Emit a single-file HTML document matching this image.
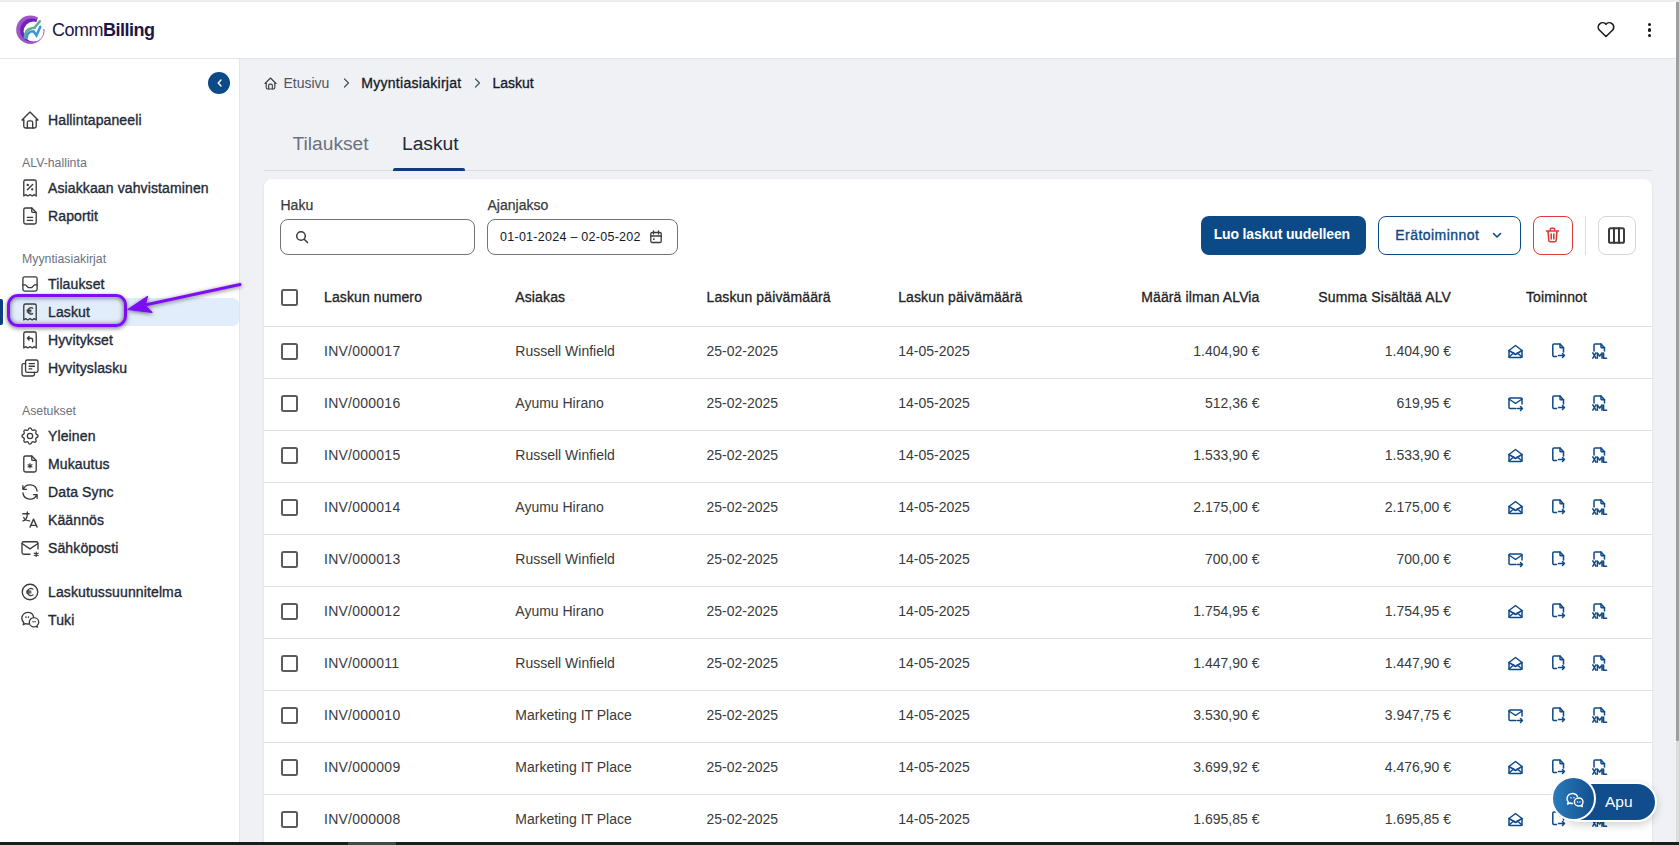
<!DOCTYPE html>
<html><head><meta charset="utf-8">
<style>
*{box-sizing:border-box;margin:0;padding:0}
html,body{width:1679px;height:845px;overflow:hidden}
body{position:relative;background:#f0f1f4;font-family:"Liberation Sans", sans-serif;}
.t{position:absolute;white-space:nowrap}
.ic{position:absolute;overflow:visible}
.abs{position:absolute}
</style></head><body>
<div class="abs" style="left:0;top:0;width:1679px;height:2px;background:#ececec"></div><div class="abs" style="left:0;top:2px;width:1676px;height:57px;background:#fff;border-bottom:1px solid #e3e5e8"></div><svg class="ic" style="left:12px;top:12px" width="38" height="36" viewBox="0 0 38 36">
<circle cx="18.4" cy="17.8" r="14.2" fill="#9f55c8"/>
<circle cx="19.8" cy="18.2" r="11.6" fill="#6a22c2"/>
<circle cx="21.6" cy="19.6" r="10" fill="#fff"/>
<path d="M21 19 L26.6 4 L40 2 L40 17 L33 17 Z" fill="#fff"/>
<path d="M12.8 25.5 C12.8 20 15.5 16.8 20.5 16 L22.5 15.8 L27.8 9.3" stroke="#62ad92" stroke-width="2.6" fill="none" stroke-linecap="round"/>
<path d="M14.6 26 C15 21.5 17.5 19.2 21.5 19.3 L24.5 23.5 L28.3 14.8" stroke="#3f96dc" stroke-width="2.6" fill="none" stroke-linecap="round"/>
</svg><div class="t" style="left:52px;top:17.5px;font-size:18px;line-height:24px;color:#1d1547;font-weight:400;letter-spacing:-0.5px;">Comm<b style="font-weight:700">Billing</b></div>
<svg class="ic" style="left:1597px;top:21px" width="18" height="17" viewBox="0 0 18 17"><path d="M9 15.5 2.3 9A4.2 4.2 0 0 1 9 3.3 4.2 4.2 0 0 1 15.7 9z" fill="none" stroke="#1a1a1a" stroke-width="1.6" stroke-linejoin="round"/></svg><div class="abs" style="left:1648.2px;top:22.9px;width:3.2px;height:3.2px;border-radius:50%;background:#1a1a1a"></div><div class="abs" style="left:1648.2px;top:28.4px;width:3.2px;height:3.2px;border-radius:50%;background:#1a1a1a"></div><div class="abs" style="left:1648.2px;top:33.9px;width:3.2px;height:3.2px;border-radius:50%;background:#1a1a1a"></div><div class="abs" style="left:0;top:59px;width:240px;height:786px;background:#fff;border-right:1px solid #e3e5e8"></div><div class="abs" style="left:208px;top:72px;width:22px;height:22px;border-radius:50%;background:#0c4a8a"></div><svg class="ic" style="left:214px;top:77px" width="12" height="12" viewBox="0 0 12 12"><path d="M7 3 4.2 6 7 9" fill="none" stroke="#fff" stroke-width="1.4" stroke-linecap="round" stroke-linejoin="round"/></svg><div class="abs" style="left:8px;top:298px;width:230.5px;height:28px;background:#e1edfb;border-radius:6px"></div><div class="abs" style="left:0;top:299px;width:3px;height:26px;background:#0c3f7e;border-radius:0 2px 2px 0"></div><svg class="ic" style="left:22px;top:112px;" width="16" height="16" viewBox="3 3 18 18" fill="none" stroke="#3b3b3b" stroke-width="1.5" stroke-linecap="round" stroke-linejoin="round"><path d="M5 12H3l9-9 9 9h-2"/><path d="M5 12v7a2 2 0 0 0 2 2h10a2 2 0 0 0 2-2v-7"/><path d="M9 21v-6a2 2 0 0 1 2-2h2a2 2 0 0 1 2 2v6"/></svg>
<div class="t" style="left:48px;top:110.0px;font-size:14px;line-height:20px;color:#1f2a37;font-weight:400;-webkit-text-stroke:0.35px #1f2a37;letter-spacing:0.12px;">Hallintapaneeli</div>
<svg class="ic" style="left:22px;top:180px;" width="16" height="16" viewBox="3 3 18 18" fill="none" stroke="#3b3b3b" stroke-width="1.5" stroke-linecap="round" stroke-linejoin="round"><path d="M5 21V5a2 2 0 0 1 2-2h10a2 2 0 0 1 2 2v16l-2.3-1.5-2.2 1.5-2.5-1.5-2.5 1.5-2.2-1.5z"/><path d="M9 14l6-6"/><circle cx="9.5" cy="8.5" r=".6" fill="#3b3b3b"/><circle cx="14.5" cy="13.5" r=".6" fill="#3b3b3b"/></svg>
<div class="t" style="left:48px;top:178.0px;font-size:14px;line-height:20px;color:#1f2a37;font-weight:400;-webkit-text-stroke:0.35px #1f2a37;letter-spacing:0.12px;">Asiakkaan vahvistaminen</div>
<svg class="ic" style="left:22px;top:208px;" width="16" height="16" viewBox="3 3 18 18" fill="none" stroke="#3b3b3b" stroke-width="1.5" stroke-linecap="round" stroke-linejoin="round"><path d="M14 3v4a1 1 0 0 0 1 1h4"/><path d="M17 21H7a2 2 0 0 1-2-2V5a2 2 0 0 1 2-2h7l5 5v11a2 2 0 0 1-2 2z"/><path d="M9 13.5h6M9 17h6"/></svg>
<div class="t" style="left:48px;top:206.0px;font-size:14px;line-height:20px;color:#1f2a37;font-weight:400;-webkit-text-stroke:0.35px #1f2a37;letter-spacing:0.12px;">Raportit</div>
<svg class="ic" style="left:22px;top:276px;" width="16" height="16" viewBox="3 3 18 18" fill="none" stroke="#3b3b3b" stroke-width="1.5" stroke-linecap="round" stroke-linejoin="round"><rect x="4" y="4" width="16" height="16" rx="2"/><path d="M4 13h3l3 3h4l3-3h3"/></svg>
<div class="t" style="left:48px;top:274.0px;font-size:14px;line-height:20px;color:#1f2a37;font-weight:400;-webkit-text-stroke:0.35px #1f2a37;letter-spacing:0.12px;">Tilaukset</div>
<svg class="ic" style="left:22px;top:304px;" width="16" height="16" viewBox="3 3 18 18" fill="none" stroke="#3b3b3b" stroke-width="1.5" stroke-linecap="round" stroke-linejoin="round"><path d="M5 21V5a2 2 0 0 1 2-2h10a2 2 0 0 1 2 2v16l-2.3-1.5-2.2 1.5-2.5-1.5-2.5 1.5-2.2-1.5z"/><path d="M15 7.6a3.6 3.6 0 1 0 0 6.3"/><path d="M8.8 10h4.2M8.8 11.8h4.2"/></svg>
<div class="t" style="left:48px;top:302.0px;font-size:14px;line-height:20px;color:#1f2a37;font-weight:400;-webkit-text-stroke:0.35px #1f2a37;letter-spacing:0.12px;">Laskut</div>
<svg class="ic" style="left:22px;top:332px;" width="16" height="16" viewBox="3 3 18 18" fill="none" stroke="#3b3b3b" stroke-width="1.5" stroke-linecap="round" stroke-linejoin="round"><path d="M5 21V5a2 2 0 0 1 2-2h10a2 2 0 0 1 2 2v16l-2.3-1.5-2.2 1.5-2.5-1.5-2.5 1.5-2.2-1.5z"/><path d="M15 14v-2a2 2 0 0 0-2-2H9l2-2M9 10l2 2"/></svg>
<div class="t" style="left:48px;top:330.0px;font-size:14px;line-height:20px;color:#1f2a37;font-weight:400;-webkit-text-stroke:0.35px #1f2a37;letter-spacing:0.12px;">Hyvitykset</div>
<svg class="ic" style="left:22px;top:360px;" width="16" height="16" viewBox="3 3 18 18" fill="none" stroke="#3b3b3b" stroke-width="1.5" stroke-linecap="round" stroke-linejoin="round"><rect x="7" y="3" width="14" height="14" rx="2"/><path d="M17 17v2a2 2 0 0 1-2 2H5a2 2 0 0 1-2-2V9a2 2 0 0 1 2-2h2"/><path d="M11 7h6M11 10h6M11 13h3"/></svg>
<div class="t" style="left:48px;top:358.0px;font-size:14px;line-height:20px;color:#1f2a37;font-weight:400;-webkit-text-stroke:0.35px #1f2a37;letter-spacing:0.12px;">Hyvityslasku</div>
<svg class="ic" style="left:22px;top:428px;" width="16" height="16" viewBox="3 3 18 18" fill="none" stroke="#3b3b3b" stroke-width="1.5" stroke-linecap="round" stroke-linejoin="round"><path d="M10.3 4.3c.4-1.8 3-1.8 3.4 0a1.7 1.7 0 0 0 2.6 1.1c1.5-.9 3.3.8 2.4 2.4a1.7 1.7 0 0 0 1 2.5c1.8.4 1.8 3 0 3.4a1.7 1.7 0 0 0-1 2.6c.9 1.5-.9 3.3-2.4 2.4a1.7 1.7 0 0 0-2.6 1c-.4 1.8-3 1.8-3.4 0a1.7 1.7 0 0 0-2.6-1c-1.5.9-3.3-.9-2.4-2.4a1.7 1.7 0 0 0-1-2.6c-1.8-.4-1.8-3 0-3.4a1.7 1.7 0 0 0 1-2.5c-.9-1.6.9-3.3 2.4-2.4 1 .6 2.3.1 2.6-1.1z"/><circle cx="12" cy="12" r="3"/></svg>
<div class="t" style="left:48px;top:426.0px;font-size:14px;line-height:20px;color:#1f2a37;font-weight:400;-webkit-text-stroke:0.35px #1f2a37;letter-spacing:0.12px;">Yleinen</div>
<svg class="ic" style="left:22px;top:456px;" width="16" height="16" viewBox="3 3 18 18" fill="none" stroke="#3b3b3b" stroke-width="1.5" stroke-linecap="round" stroke-linejoin="round"><path d="M14 3v4a1 1 0 0 0 1 1h4"/><path d="M17 21H7a2 2 0 0 1-2-2V5a2 2 0 0 1 2-2h7l5 5v11a2 2 0 0 1-2 2z"/><path d="M12 11.5v5M9.8 12.8l4.4 2.5M9.8 15.3l4.4-2.5" stroke-width="1.3"/></svg>
<div class="t" style="left:48px;top:454.0px;font-size:14px;line-height:20px;color:#1f2a37;font-weight:400;-webkit-text-stroke:0.35px #1f2a37;letter-spacing:0.12px;">Mukautus</div>
<svg class="ic" style="left:22px;top:484px;" width="16" height="16" viewBox="3 3 18 18" fill="none" stroke="#3b3b3b" stroke-width="1.5" stroke-linecap="round" stroke-linejoin="round"><path d="M20 11A8.1 8.1 0 0 0 4.5 9M4 5v4h4"/><path d="M4 13a8.1 8.1 0 0 0 15.5 2m.5 4v-4h-4"/></svg>
<div class="t" style="left:48px;top:482.0px;font-size:14px;line-height:20px;color:#1f2a37;font-weight:400;-webkit-text-stroke:0.35px #1f2a37;letter-spacing:0.12px;">Data Sync</div>
<svg class="ic" style="left:22px;top:512px;" width="16" height="16" viewBox="3 3 18 18" fill="none" stroke="#3b3b3b" stroke-width="1.5" stroke-linecap="round" stroke-linejoin="round"><path d="M4 5h7M9 3v2c0 4.4-2.2 8-5 8M5 9c0 2.1 2.9 3.9 6.6 4"/><path d="M12 20l4-9 4 9M19.1 18h-6.2"/></svg>
<div class="t" style="left:48px;top:510.0px;font-size:14px;line-height:20px;color:#1f2a37;font-weight:400;-webkit-text-stroke:0.35px #1f2a37;letter-spacing:0.12px;">Käännös</div>
<svg class="ic" style="left:22px;top:540px;" width="16" height="16" viewBox="3 3 18 18" fill="none" stroke="#3b3b3b" stroke-width="1.5" stroke-linecap="round" stroke-linejoin="round"><path d="M12 19H5a2 2 0 0 1-2-2V7a2 2 0 0 1 2-2h14a2 2 0 0 1 2 2v6"/><path d="M3 7l9 6 9-6"/><path d="M19 16.5v5M16.8 17.8l4.4 2.5M16.8 20.3l4.4-2.5" stroke-width="1.3"/></svg>
<div class="t" style="left:48px;top:538.0px;font-size:14px;line-height:20px;color:#1f2a37;font-weight:400;-webkit-text-stroke:0.35px #1f2a37;letter-spacing:0.12px;">Sähköposti</div>
<svg class="ic" style="left:22px;top:584px;" width="16" height="16" viewBox="3 3 18 18" fill="none" stroke="#3b3b3b" stroke-width="1.5" stroke-linecap="round" stroke-linejoin="round"><circle cx="12" cy="12" r="8.7"/><path d="M15.3 8.6a4 4 0 1 0 0 6.8"/><path d="M8.3 11h4.7M8.3 13h4.7"/></svg>
<div class="t" style="left:48px;top:582.0px;font-size:14px;line-height:20px;color:#1f2a37;font-weight:400;-webkit-text-stroke:0.35px #1f2a37;letter-spacing:0.12px;">Laskutussuunnitelma</div>
<svg class="ic" style="left:22px;top:612px;" width="16" height="16" viewBox="3 3 18 18" fill="none" stroke="#3b3b3b" stroke-width="1.5" stroke-linecap="round" stroke-linejoin="round"><path d="M11.5 16.4C10.9 16.5 10.2 16.5 9.5 16.5 8.6 16.5 7.7 16.3 6.9 16L4.4 17.3 5 14.8C3.6 13.6 2.8 12 2.8 10 2.8 6.4 5.8 3.5 9.5 3.5 12.7 3.5 15.4 5.6 16 8.5"/><path d="M21.8 14.6C21.8 11.7 19.4 9.4 16.5 9.4S11.2 11.7 11.2 14.6 13.6 19.8 16.5 19.8C17.3 19.8 18 19.6 18.7 19.3L20.3 20.1 19.9 18.4C21.1 17.4 21.8 16.1 21.8 14.6Z"/><path d="M7.5 8.8h.01M10.3 8.8h.01M15.4 14h.01M17.7 14h.01" stroke-width="1.8"/></svg>
<div class="t" style="left:48px;top:610.0px;font-size:14px;line-height:20px;color:#1f2a37;font-weight:400;-webkit-text-stroke:0.35px #1f2a37;letter-spacing:0.12px;">Tuki</div>
<div class="t" style="left:22px;top:154.5px;font-size:12.3px;line-height:16px;color:#6b7280;font-weight:400;">ALV-hallinta</div>
<div class="t" style="left:22px;top:250.5px;font-size:12.3px;line-height:16px;color:#6b7280;font-weight:400;">Myyntiasiakirjat</div>
<div class="t" style="left:22px;top:402.5px;font-size:12.3px;line-height:16px;color:#6b7280;font-weight:400;">Asetukset</div>
<svg class="ic" style="left:265px;top:78px;" width="11" height="11" viewBox="3 3 18 18" fill="none" stroke="#3f3f46" stroke-width="1.9" stroke-linecap="round" stroke-linejoin="round"><path d="M5 12H3l9-9 9 9h-2"/><path d="M5 12v7a2 2 0 0 0 2 2h10a2 2 0 0 0 2-2v-7"/><path d="M9 21v-6a2 2 0 0 1 2-2h2a2 2 0 0 1 2 2v6"/></svg>
<div class="t" style="left:283.5px;top:73.3px;font-size:14px;line-height:20px;color:#4b5563;font-weight:400;">Etusivu</div>
<svg class="ic" style="left:340px;top:77px;" width="12" height="12" viewBox="0 0 12 12" fill="none" stroke="#4b5563" stroke-width="1.3" stroke-linecap="round" stroke-linejoin="round"><path d="M4.5 2 8.5 6 4.5 10"/></svg>
<div class="t" style="left:361.3px;top:73.3px;font-size:14px;line-height:20px;color:#111827;font-weight:400;-webkit-text-stroke:0.3px #111827;letter-spacing:0.28px;">Myyntiasiakirjat</div>
<svg class="ic" style="left:471px;top:77px;" width="12" height="12" viewBox="0 0 12 12" fill="none" stroke="#4b5563" stroke-width="1.3" stroke-linecap="round" stroke-linejoin="round"><path d="M4.5 2 8.5 6 4.5 10"/></svg>
<div class="t" style="left:492.5px;top:73.3px;font-size:14px;line-height:20px;color:#111827;font-weight:400;-webkit-text-stroke:0.3px #111827;">Laskut</div>
<div class="abs" style="left:264px;top:170px;width:1388px;height:1px;background:#d9dce1"></div><div class="t" style="left:292.5px;top:130.6px;font-size:19.2px;line-height:26px;color:#6b7280;font-weight:400;">Tilaukset</div>
<div class="t" style="left:402px;top:130.6px;font-size:19.2px;line-height:26px;color:#1f2937;font-weight:400;">Laskut</div>
<div class="abs" style="left:393px;top:168px;width:72px;height:3px;background:#0c3f7e;border-radius:2px 2px 0 0"></div><div class="abs" style="left:264px;top:179px;width:1388px;height:700px;background:#fff;border-radius:8px;box-shadow:0 1px 3px rgba(0,0,0,0.09)"></div><div class="t" style="left:280.5px;top:195.0px;font-size:14px;line-height:20px;color:#3a3a3a;font-weight:400;-webkit-text-stroke:0.25px #3a3a3a;">Haku</div>
<div class="abs" style="left:280px;top:219px;width:195px;height:36px;border:1px solid #737373;border-radius:8px;background:#fff"></div><svg class="ic" style="left:295px;top:229.5px;" width="14" height="14" viewBox="0 0 14 14" fill="none" stroke="#3b3b3b" stroke-width="1.5" stroke-linecap="round" stroke-linejoin="round"><circle cx="6" cy="6" r="4.3"/><path d="M9.2 9.2 12.5 12.5"/></svg>
<div class="t" style="left:487.5px;top:195.0px;font-size:14px;line-height:20px;color:#3a3a3a;font-weight:400;-webkit-text-stroke:0.25px #3a3a3a;">Ajanjakso</div>
<div class="abs" style="left:487px;top:219px;width:191px;height:36px;border:1px solid #737373;border-radius:8px;background:#fff"></div><div class="t" style="left:500px;top:227.5px;font-size:12.5px;line-height:18px;color:#111827;font-weight:400;letter-spacing:0.27px;">01-01-2024 – 02-05-202</div>
<svg class="ic" style="left:649px;top:230px;" width="14" height="14" viewBox="0 0 14 14" fill="none" stroke="#3b3b3b" stroke-width="1.3" stroke-linecap="round" stroke-linejoin="round"><rect x="1.8" y="2.5" width="10.4" height="10" rx="1.3"/><path d="M4.5 1v3M9.5 1v3M1.8 6h10.4"/><rect x="4" y="8.3" width="1.6" height="1.6" fill="#3b3b3b" stroke="none"/></svg>
<div class="abs" style="left:1201px;top:216px;width:165px;height:39px;background:#0c4a87;border-radius:8px"></div><div class="t" style="left:1199.3px;width:165px;text-align:center;top:223.8px;font-size:14px;line-height:20px;color:#ffffff;font-weight:700;letter-spacing:-0.15px;">Luo laskut uudelleen</div>
<div class="abs" style="left:1378px;top:216px;width:143px;height:39px;border:1.3px solid #0c4a87;border-radius:8px;background:#fff"></div><div class="t" style="left:1395.3px;top:224.5px;font-size:14px;line-height:20px;color:#0c4a87;font-weight:400;-webkit-text-stroke:0.35px #0c4a87;letter-spacing:0.45px;">Erätoiminnot</div>
<svg class="ic" style="left:1491px;top:229px;" width="12" height="12" viewBox="0 0 12 12" fill="none" stroke="#0c4a87" stroke-width="1.6" stroke-linecap="round" stroke-linejoin="round"><path d="M2.5 4.5 6 8 9.5 4.5"/></svg>
<div class="abs" style="left:1533px;top:216px;width:40px;height:39px;border:1.3px solid #dc3b3b;border-radius:8px;background:#fff"></div><svg class="ic" style="left:1545px;top:227px;" width="15" height="16" viewBox="0 0 15 16" fill="none" stroke="#dc3b3b" stroke-width="1.6" stroke-linecap="round" stroke-linejoin="round"><path d="M1.5 4h12M3 4l.8 9.5a1.5 1.5 0 0 0 1.5 1.3h4.4a1.5 1.5 0 0 0 1.5-1.3L12 4M5.3 4V2.3a1 1 0 0 1 1-1h2.4a1 1 0 0 1 1 1V4M6.2 7v5M8.8 7v5"/></svg>
<div class="abs" style="left:1585px;top:216px;width:1px;height:39px;background:#dedede"></div><div class="abs" style="left:1598px;top:216px;width:38px;height:39px;border:1px solid #d6d6d6;border-radius:8px;background:#fff"></div><svg class="ic" style="left:1608px;top:226.5px;" width="17" height="17" viewBox="0 0 17 17" fill="none" stroke="#3b3b3b" stroke-width="2" stroke-linecap="round" stroke-linejoin="round"><rect x="1" y="1.2" width="15" height="14.6" rx="1.6"/><path d="M6 1.2v14.6M11 1.2v14.6"/></svg>
<div class="abs" style="left:280.5px;top:289px;width:17px;height:17px;border:2px solid #5c5c5c;border-radius:2.5px"></div><div class="t" style="left:324px;top:287.0px;font-size:14px;line-height:20px;color:#222222;font-weight:400;-webkit-text-stroke:0.3px #222222;letter-spacing:0.12px;">Laskun numero</div>
<div class="t" style="left:515.3px;top:287.0px;font-size:14px;line-height:20px;color:#222222;font-weight:400;-webkit-text-stroke:0.3px #222222;letter-spacing:0.12px;">Asiakas</div>
<div class="t" style="left:706.5px;top:287.0px;font-size:14px;line-height:20px;color:#222222;font-weight:400;-webkit-text-stroke:0.3px #222222;letter-spacing:0.12px;">Laskun päivämäärä</div>
<div class="t" style="left:898.2px;top:287.0px;font-size:14px;line-height:20px;color:#222222;font-weight:400;-webkit-text-stroke:0.3px #222222;letter-spacing:0.12px;">Laskun päivämäärä</div>
<div class="t" style="right:419.5px;top:287.0px;font-size:14px;line-height:20px;color:#222222;font-weight:400;-webkit-text-stroke:0.3px #222222;letter-spacing:0.12px;">Määrä ilman ALVia</div>
<div class="t" style="right:228px;top:287.0px;font-size:14px;line-height:20px;color:#222222;font-weight:400;-webkit-text-stroke:0.3px #222222;letter-spacing:0.12px;">Summa Sisältää ALV</div>
<div class="t" style="left:1506.5px;width:100px;text-align:center;top:287.0px;font-size:14px;line-height:20px;color:#222222;font-weight:400;-webkit-text-stroke:0.3px #222222;letter-spacing:0.12px;">Toiminnot</div>
<div class="abs" style="left:264px;top:326px;width:1388px;height:1px;background:#e0e0e0"></div><div class="abs" style="left:280.5px;top:343px;width:17px;height:17px;border:2px solid #5c5c5c;border-radius:2.5px"></div><div class="t" style="left:324px;top:341.0px;font-size:14px;line-height:20px;color:#3a3a3a;font-weight:400;letter-spacing:0.25px;">INV/000017</div>
<div class="t" style="left:515.3px;top:341.0px;font-size:14px;line-height:20px;color:#3a3a3a;font-weight:400;">Russell Winfield</div>
<div class="t" style="left:706.5px;top:341.0px;font-size:14px;line-height:20px;color:#3a3a3a;font-weight:400;">25-02-2025</div>
<div class="t" style="left:898.2px;top:341.0px;font-size:14px;line-height:20px;color:#3a3a3a;font-weight:400;">14-05-2025</div>
<div class="t" style="right:419.5px;top:341.0px;font-size:14px;line-height:20px;color:#3a3a3a;font-weight:400;">1.404,90 €</div>
<div class="t" style="right:228px;top:341.0px;font-size:14px;line-height:20px;color:#3a3a3a;font-weight:400;">1.404,90 €</div>
<div class="abs" style="left:264px;top:378px;width:1388px;height:1px;background:#e0e0e0"></div><svg class="ic" style="left:1507.5px;top:344px;" width="15" height="15" viewBox="0 0 15 15" fill="none" stroke="#0e4a87" stroke-width="1.5" stroke-linecap="round" stroke-linejoin="round"><path d="M1 6.5 7.5 1.5 14 6.5V12.5a1 1 0 0 1-1 1H2a1 1 0 0 1-1-1z"/><path d="M1 6.5 7.5 10.5 14 6.5M1 13l4.8-4.2M14 13 9.2 8.8"/></svg>
<svg class="ic" style="left:1551px;top:343px;" width="15" height="16" viewBox="0 0 15 16" fill="none" stroke="#0e4a87" stroke-width="1.5" stroke-linecap="round" stroke-linejoin="round"><path d="M9 1v3a.8.8 0 0 0 .8.8H12.5"/><path d="M5.5 13.5H3a1.2 1.2 0 0 1-1.2-1.2V2.2A1.2 1.2 0 0 1 3 1h6l3.5 3.8V9"/><path d="M7.5 12.5h6M11.5 10.5l2 2-2 2"/></svg>
<svg class="ic" style="left:1592px;top:343px;" width="15" height="16" viewBox="0 0 15 16" fill="none" stroke="#0e4a87" stroke-width="1.5" stroke-linecap="round" stroke-linejoin="round"><path d="M9 1v3a.8.8 0 0 0 .8.8H12.5"/><path d="M2 8V2.2A1.2 1.2 0 0 1 3.2 1h5.8l3.5 3.8V8"/></svg>
<svg class="ic" style="left:1592px;top:343px;" width="15" height="16" viewBox="0 0 15 16" fill="none" stroke="#0e4a87" stroke-width="1.5" stroke-linecap="round" stroke-linejoin="round"><path d="M0.8 9.9 3.9 15.2M3.9 9.9 0.8 15.2M5.4 15.2V9.9L7.7 13.1 10 9.9V15.2M11.6 9.9V15.2H14.6"/></svg>
<div class="abs" style="left:280.5px;top:395px;width:17px;height:17px;border:2px solid #5c5c5c;border-radius:2.5px"></div><div class="t" style="left:324px;top:393.0px;font-size:14px;line-height:20px;color:#3a3a3a;font-weight:400;letter-spacing:0.25px;">INV/000016</div>
<div class="t" style="left:515.3px;top:393.0px;font-size:14px;line-height:20px;color:#3a3a3a;font-weight:400;">Ayumu Hirano</div>
<div class="t" style="left:706.5px;top:393.0px;font-size:14px;line-height:20px;color:#3a3a3a;font-weight:400;">25-02-2025</div>
<div class="t" style="left:898.2px;top:393.0px;font-size:14px;line-height:20px;color:#3a3a3a;font-weight:400;">14-05-2025</div>
<div class="t" style="right:419.5px;top:393.0px;font-size:14px;line-height:20px;color:#3a3a3a;font-weight:400;">512,36 €</div>
<div class="t" style="right:228px;top:393.0px;font-size:14px;line-height:20px;color:#3a3a3a;font-weight:400;">619,95 €</div>
<div class="abs" style="left:264px;top:430px;width:1388px;height:1px;background:#e0e0e0"></div><svg class="ic" style="left:1507.5px;top:396px;" width="15" height="15" viewBox="0 0 15 15" fill="none" stroke="#0e4a87" stroke-width="1.5" stroke-linecap="round" stroke-linejoin="round"><path d="M8 12.5H2a1 1 0 0 1-1-1V3a1 1 0 0 1 1-1h11a1 1 0 0 1 1 1v5"/><path d="M1 3 7.5 7.5 14 3"/><path d="M9.5 12.5h5M12.5 10.5l2 2-2 2"/></svg>
<svg class="ic" style="left:1551px;top:395px;" width="15" height="16" viewBox="0 0 15 16" fill="none" stroke="#0e4a87" stroke-width="1.5" stroke-linecap="round" stroke-linejoin="round"><path d="M9 1v3a.8.8 0 0 0 .8.8H12.5"/><path d="M5.5 13.5H3a1.2 1.2 0 0 1-1.2-1.2V2.2A1.2 1.2 0 0 1 3 1h6l3.5 3.8V9"/><path d="M7.5 12.5h6M11.5 10.5l2 2-2 2"/></svg>
<svg class="ic" style="left:1592px;top:395px;" width="15" height="16" viewBox="0 0 15 16" fill="none" stroke="#0e4a87" stroke-width="1.5" stroke-linecap="round" stroke-linejoin="round"><path d="M9 1v3a.8.8 0 0 0 .8.8H12.5"/><path d="M2 8V2.2A1.2 1.2 0 0 1 3.2 1h5.8l3.5 3.8V8"/></svg>
<svg class="ic" style="left:1592px;top:395px;" width="15" height="16" viewBox="0 0 15 16" fill="none" stroke="#0e4a87" stroke-width="1.5" stroke-linecap="round" stroke-linejoin="round"><path d="M0.8 9.9 3.9 15.2M3.9 9.9 0.8 15.2M5.4 15.2V9.9L7.7 13.1 10 9.9V15.2M11.6 9.9V15.2H14.6"/></svg>
<div class="abs" style="left:280.5px;top:447px;width:17px;height:17px;border:2px solid #5c5c5c;border-radius:2.5px"></div><div class="t" style="left:324px;top:445.0px;font-size:14px;line-height:20px;color:#3a3a3a;font-weight:400;letter-spacing:0.25px;">INV/000015</div>
<div class="t" style="left:515.3px;top:445.0px;font-size:14px;line-height:20px;color:#3a3a3a;font-weight:400;">Russell Winfield</div>
<div class="t" style="left:706.5px;top:445.0px;font-size:14px;line-height:20px;color:#3a3a3a;font-weight:400;">25-02-2025</div>
<div class="t" style="left:898.2px;top:445.0px;font-size:14px;line-height:20px;color:#3a3a3a;font-weight:400;">14-05-2025</div>
<div class="t" style="right:419.5px;top:445.0px;font-size:14px;line-height:20px;color:#3a3a3a;font-weight:400;">1.533,90 €</div>
<div class="t" style="right:228px;top:445.0px;font-size:14px;line-height:20px;color:#3a3a3a;font-weight:400;">1.533,90 €</div>
<div class="abs" style="left:264px;top:482px;width:1388px;height:1px;background:#e0e0e0"></div><svg class="ic" style="left:1507.5px;top:448px;" width="15" height="15" viewBox="0 0 15 15" fill="none" stroke="#0e4a87" stroke-width="1.5" stroke-linecap="round" stroke-linejoin="round"><path d="M1 6.5 7.5 1.5 14 6.5V12.5a1 1 0 0 1-1 1H2a1 1 0 0 1-1-1z"/><path d="M1 6.5 7.5 10.5 14 6.5M1 13l4.8-4.2M14 13 9.2 8.8"/></svg>
<svg class="ic" style="left:1551px;top:447px;" width="15" height="16" viewBox="0 0 15 16" fill="none" stroke="#0e4a87" stroke-width="1.5" stroke-linecap="round" stroke-linejoin="round"><path d="M9 1v3a.8.8 0 0 0 .8.8H12.5"/><path d="M5.5 13.5H3a1.2 1.2 0 0 1-1.2-1.2V2.2A1.2 1.2 0 0 1 3 1h6l3.5 3.8V9"/><path d="M7.5 12.5h6M11.5 10.5l2 2-2 2"/></svg>
<svg class="ic" style="left:1592px;top:447px;" width="15" height="16" viewBox="0 0 15 16" fill="none" stroke="#0e4a87" stroke-width="1.5" stroke-linecap="round" stroke-linejoin="round"><path d="M9 1v3a.8.8 0 0 0 .8.8H12.5"/><path d="M2 8V2.2A1.2 1.2 0 0 1 3.2 1h5.8l3.5 3.8V8"/></svg>
<svg class="ic" style="left:1592px;top:447px;" width="15" height="16" viewBox="0 0 15 16" fill="none" stroke="#0e4a87" stroke-width="1.5" stroke-linecap="round" stroke-linejoin="round"><path d="M0.8 9.9 3.9 15.2M3.9 9.9 0.8 15.2M5.4 15.2V9.9L7.7 13.1 10 9.9V15.2M11.6 9.9V15.2H14.6"/></svg>
<div class="abs" style="left:280.5px;top:499px;width:17px;height:17px;border:2px solid #5c5c5c;border-radius:2.5px"></div><div class="t" style="left:324px;top:497.0px;font-size:14px;line-height:20px;color:#3a3a3a;font-weight:400;letter-spacing:0.25px;">INV/000014</div>
<div class="t" style="left:515.3px;top:497.0px;font-size:14px;line-height:20px;color:#3a3a3a;font-weight:400;">Ayumu Hirano</div>
<div class="t" style="left:706.5px;top:497.0px;font-size:14px;line-height:20px;color:#3a3a3a;font-weight:400;">25-02-2025</div>
<div class="t" style="left:898.2px;top:497.0px;font-size:14px;line-height:20px;color:#3a3a3a;font-weight:400;">14-05-2025</div>
<div class="t" style="right:419.5px;top:497.0px;font-size:14px;line-height:20px;color:#3a3a3a;font-weight:400;">2.175,00 €</div>
<div class="t" style="right:228px;top:497.0px;font-size:14px;line-height:20px;color:#3a3a3a;font-weight:400;">2.175,00 €</div>
<div class="abs" style="left:264px;top:534px;width:1388px;height:1px;background:#e0e0e0"></div><svg class="ic" style="left:1507.5px;top:500px;" width="15" height="15" viewBox="0 0 15 15" fill="none" stroke="#0e4a87" stroke-width="1.5" stroke-linecap="round" stroke-linejoin="round"><path d="M1 6.5 7.5 1.5 14 6.5V12.5a1 1 0 0 1-1 1H2a1 1 0 0 1-1-1z"/><path d="M1 6.5 7.5 10.5 14 6.5M1 13l4.8-4.2M14 13 9.2 8.8"/></svg>
<svg class="ic" style="left:1551px;top:499px;" width="15" height="16" viewBox="0 0 15 16" fill="none" stroke="#0e4a87" stroke-width="1.5" stroke-linecap="round" stroke-linejoin="round"><path d="M9 1v3a.8.8 0 0 0 .8.8H12.5"/><path d="M5.5 13.5H3a1.2 1.2 0 0 1-1.2-1.2V2.2A1.2 1.2 0 0 1 3 1h6l3.5 3.8V9"/><path d="M7.5 12.5h6M11.5 10.5l2 2-2 2"/></svg>
<svg class="ic" style="left:1592px;top:499px;" width="15" height="16" viewBox="0 0 15 16" fill="none" stroke="#0e4a87" stroke-width="1.5" stroke-linecap="round" stroke-linejoin="round"><path d="M9 1v3a.8.8 0 0 0 .8.8H12.5"/><path d="M2 8V2.2A1.2 1.2 0 0 1 3.2 1h5.8l3.5 3.8V8"/></svg>
<svg class="ic" style="left:1592px;top:499px;" width="15" height="16" viewBox="0 0 15 16" fill="none" stroke="#0e4a87" stroke-width="1.5" stroke-linecap="round" stroke-linejoin="round"><path d="M0.8 9.9 3.9 15.2M3.9 9.9 0.8 15.2M5.4 15.2V9.9L7.7 13.1 10 9.9V15.2M11.6 9.9V15.2H14.6"/></svg>
<div class="abs" style="left:280.5px;top:551px;width:17px;height:17px;border:2px solid #5c5c5c;border-radius:2.5px"></div><div class="t" style="left:324px;top:549.0px;font-size:14px;line-height:20px;color:#3a3a3a;font-weight:400;letter-spacing:0.25px;">INV/000013</div>
<div class="t" style="left:515.3px;top:549.0px;font-size:14px;line-height:20px;color:#3a3a3a;font-weight:400;">Russell Winfield</div>
<div class="t" style="left:706.5px;top:549.0px;font-size:14px;line-height:20px;color:#3a3a3a;font-weight:400;">25-02-2025</div>
<div class="t" style="left:898.2px;top:549.0px;font-size:14px;line-height:20px;color:#3a3a3a;font-weight:400;">14-05-2025</div>
<div class="t" style="right:419.5px;top:549.0px;font-size:14px;line-height:20px;color:#3a3a3a;font-weight:400;">700,00 €</div>
<div class="t" style="right:228px;top:549.0px;font-size:14px;line-height:20px;color:#3a3a3a;font-weight:400;">700,00 €</div>
<div class="abs" style="left:264px;top:586px;width:1388px;height:1px;background:#e0e0e0"></div><svg class="ic" style="left:1507.5px;top:552px;" width="15" height="15" viewBox="0 0 15 15" fill="none" stroke="#0e4a87" stroke-width="1.5" stroke-linecap="round" stroke-linejoin="round"><path d="M8 12.5H2a1 1 0 0 1-1-1V3a1 1 0 0 1 1-1h11a1 1 0 0 1 1 1v5"/><path d="M1 3 7.5 7.5 14 3"/><path d="M9.5 12.5h5M12.5 10.5l2 2-2 2"/></svg>
<svg class="ic" style="left:1551px;top:551px;" width="15" height="16" viewBox="0 0 15 16" fill="none" stroke="#0e4a87" stroke-width="1.5" stroke-linecap="round" stroke-linejoin="round"><path d="M9 1v3a.8.8 0 0 0 .8.8H12.5"/><path d="M5.5 13.5H3a1.2 1.2 0 0 1-1.2-1.2V2.2A1.2 1.2 0 0 1 3 1h6l3.5 3.8V9"/><path d="M7.5 12.5h6M11.5 10.5l2 2-2 2"/></svg>
<svg class="ic" style="left:1592px;top:551px;" width="15" height="16" viewBox="0 0 15 16" fill="none" stroke="#0e4a87" stroke-width="1.5" stroke-linecap="round" stroke-linejoin="round"><path d="M9 1v3a.8.8 0 0 0 .8.8H12.5"/><path d="M2 8V2.2A1.2 1.2 0 0 1 3.2 1h5.8l3.5 3.8V8"/></svg>
<svg class="ic" style="left:1592px;top:551px;" width="15" height="16" viewBox="0 0 15 16" fill="none" stroke="#0e4a87" stroke-width="1.5" stroke-linecap="round" stroke-linejoin="round"><path d="M0.8 9.9 3.9 15.2M3.9 9.9 0.8 15.2M5.4 15.2V9.9L7.7 13.1 10 9.9V15.2M11.6 9.9V15.2H14.6"/></svg>
<div class="abs" style="left:280.5px;top:603px;width:17px;height:17px;border:2px solid #5c5c5c;border-radius:2.5px"></div><div class="t" style="left:324px;top:601.0px;font-size:14px;line-height:20px;color:#3a3a3a;font-weight:400;letter-spacing:0.25px;">INV/000012</div>
<div class="t" style="left:515.3px;top:601.0px;font-size:14px;line-height:20px;color:#3a3a3a;font-weight:400;">Ayumu Hirano</div>
<div class="t" style="left:706.5px;top:601.0px;font-size:14px;line-height:20px;color:#3a3a3a;font-weight:400;">25-02-2025</div>
<div class="t" style="left:898.2px;top:601.0px;font-size:14px;line-height:20px;color:#3a3a3a;font-weight:400;">14-05-2025</div>
<div class="t" style="right:419.5px;top:601.0px;font-size:14px;line-height:20px;color:#3a3a3a;font-weight:400;">1.754,95 €</div>
<div class="t" style="right:228px;top:601.0px;font-size:14px;line-height:20px;color:#3a3a3a;font-weight:400;">1.754,95 €</div>
<div class="abs" style="left:264px;top:638px;width:1388px;height:1px;background:#e0e0e0"></div><svg class="ic" style="left:1507.5px;top:604px;" width="15" height="15" viewBox="0 0 15 15" fill="none" stroke="#0e4a87" stroke-width="1.5" stroke-linecap="round" stroke-linejoin="round"><path d="M1 6.5 7.5 1.5 14 6.5V12.5a1 1 0 0 1-1 1H2a1 1 0 0 1-1-1z"/><path d="M1 6.5 7.5 10.5 14 6.5M1 13l4.8-4.2M14 13 9.2 8.8"/></svg>
<svg class="ic" style="left:1551px;top:603px;" width="15" height="16" viewBox="0 0 15 16" fill="none" stroke="#0e4a87" stroke-width="1.5" stroke-linecap="round" stroke-linejoin="round"><path d="M9 1v3a.8.8 0 0 0 .8.8H12.5"/><path d="M5.5 13.5H3a1.2 1.2 0 0 1-1.2-1.2V2.2A1.2 1.2 0 0 1 3 1h6l3.5 3.8V9"/><path d="M7.5 12.5h6M11.5 10.5l2 2-2 2"/></svg>
<svg class="ic" style="left:1592px;top:603px;" width="15" height="16" viewBox="0 0 15 16" fill="none" stroke="#0e4a87" stroke-width="1.5" stroke-linecap="round" stroke-linejoin="round"><path d="M9 1v3a.8.8 0 0 0 .8.8H12.5"/><path d="M2 8V2.2A1.2 1.2 0 0 1 3.2 1h5.8l3.5 3.8V8"/></svg>
<svg class="ic" style="left:1592px;top:603px;" width="15" height="16" viewBox="0 0 15 16" fill="none" stroke="#0e4a87" stroke-width="1.5" stroke-linecap="round" stroke-linejoin="round"><path d="M0.8 9.9 3.9 15.2M3.9 9.9 0.8 15.2M5.4 15.2V9.9L7.7 13.1 10 9.9V15.2M11.6 9.9V15.2H14.6"/></svg>
<div class="abs" style="left:280.5px;top:655px;width:17px;height:17px;border:2px solid #5c5c5c;border-radius:2.5px"></div><div class="t" style="left:324px;top:653.0px;font-size:14px;line-height:20px;color:#3a3a3a;font-weight:400;letter-spacing:0.25px;">INV/000011</div>
<div class="t" style="left:515.3px;top:653.0px;font-size:14px;line-height:20px;color:#3a3a3a;font-weight:400;">Russell Winfield</div>
<div class="t" style="left:706.5px;top:653.0px;font-size:14px;line-height:20px;color:#3a3a3a;font-weight:400;">25-02-2025</div>
<div class="t" style="left:898.2px;top:653.0px;font-size:14px;line-height:20px;color:#3a3a3a;font-weight:400;">14-05-2025</div>
<div class="t" style="right:419.5px;top:653.0px;font-size:14px;line-height:20px;color:#3a3a3a;font-weight:400;">1.447,90 €</div>
<div class="t" style="right:228px;top:653.0px;font-size:14px;line-height:20px;color:#3a3a3a;font-weight:400;">1.447,90 €</div>
<div class="abs" style="left:264px;top:690px;width:1388px;height:1px;background:#e0e0e0"></div><svg class="ic" style="left:1507.5px;top:656px;" width="15" height="15" viewBox="0 0 15 15" fill="none" stroke="#0e4a87" stroke-width="1.5" stroke-linecap="round" stroke-linejoin="round"><path d="M1 6.5 7.5 1.5 14 6.5V12.5a1 1 0 0 1-1 1H2a1 1 0 0 1-1-1z"/><path d="M1 6.5 7.5 10.5 14 6.5M1 13l4.8-4.2M14 13 9.2 8.8"/></svg>
<svg class="ic" style="left:1551px;top:655px;" width="15" height="16" viewBox="0 0 15 16" fill="none" stroke="#0e4a87" stroke-width="1.5" stroke-linecap="round" stroke-linejoin="round"><path d="M9 1v3a.8.8 0 0 0 .8.8H12.5"/><path d="M5.5 13.5H3a1.2 1.2 0 0 1-1.2-1.2V2.2A1.2 1.2 0 0 1 3 1h6l3.5 3.8V9"/><path d="M7.5 12.5h6M11.5 10.5l2 2-2 2"/></svg>
<svg class="ic" style="left:1592px;top:655px;" width="15" height="16" viewBox="0 0 15 16" fill="none" stroke="#0e4a87" stroke-width="1.5" stroke-linecap="round" stroke-linejoin="round"><path d="M9 1v3a.8.8 0 0 0 .8.8H12.5"/><path d="M2 8V2.2A1.2 1.2 0 0 1 3.2 1h5.8l3.5 3.8V8"/></svg>
<svg class="ic" style="left:1592px;top:655px;" width="15" height="16" viewBox="0 0 15 16" fill="none" stroke="#0e4a87" stroke-width="1.5" stroke-linecap="round" stroke-linejoin="round"><path d="M0.8 9.9 3.9 15.2M3.9 9.9 0.8 15.2M5.4 15.2V9.9L7.7 13.1 10 9.9V15.2M11.6 9.9V15.2H14.6"/></svg>
<div class="abs" style="left:280.5px;top:707px;width:17px;height:17px;border:2px solid #5c5c5c;border-radius:2.5px"></div><div class="t" style="left:324px;top:705.0px;font-size:14px;line-height:20px;color:#3a3a3a;font-weight:400;letter-spacing:0.25px;">INV/000010</div>
<div class="t" style="left:515.3px;top:705.0px;font-size:14px;line-height:20px;color:#3a3a3a;font-weight:400;">Marketing IT Place</div>
<div class="t" style="left:706.5px;top:705.0px;font-size:14px;line-height:20px;color:#3a3a3a;font-weight:400;">25-02-2025</div>
<div class="t" style="left:898.2px;top:705.0px;font-size:14px;line-height:20px;color:#3a3a3a;font-weight:400;">14-05-2025</div>
<div class="t" style="right:419.5px;top:705.0px;font-size:14px;line-height:20px;color:#3a3a3a;font-weight:400;">3.530,90 €</div>
<div class="t" style="right:228px;top:705.0px;font-size:14px;line-height:20px;color:#3a3a3a;font-weight:400;">3.947,75 €</div>
<div class="abs" style="left:264px;top:742px;width:1388px;height:1px;background:#e0e0e0"></div><svg class="ic" style="left:1507.5px;top:708px;" width="15" height="15" viewBox="0 0 15 15" fill="none" stroke="#0e4a87" stroke-width="1.5" stroke-linecap="round" stroke-linejoin="round"><path d="M8 12.5H2a1 1 0 0 1-1-1V3a1 1 0 0 1 1-1h11a1 1 0 0 1 1 1v5"/><path d="M1 3 7.5 7.5 14 3"/><path d="M9.5 12.5h5M12.5 10.5l2 2-2 2"/></svg>
<svg class="ic" style="left:1551px;top:707px;" width="15" height="16" viewBox="0 0 15 16" fill="none" stroke="#0e4a87" stroke-width="1.5" stroke-linecap="round" stroke-linejoin="round"><path d="M9 1v3a.8.8 0 0 0 .8.8H12.5"/><path d="M5.5 13.5H3a1.2 1.2 0 0 1-1.2-1.2V2.2A1.2 1.2 0 0 1 3 1h6l3.5 3.8V9"/><path d="M7.5 12.5h6M11.5 10.5l2 2-2 2"/></svg>
<svg class="ic" style="left:1592px;top:707px;" width="15" height="16" viewBox="0 0 15 16" fill="none" stroke="#0e4a87" stroke-width="1.5" stroke-linecap="round" stroke-linejoin="round"><path d="M9 1v3a.8.8 0 0 0 .8.8H12.5"/><path d="M2 8V2.2A1.2 1.2 0 0 1 3.2 1h5.8l3.5 3.8V8"/></svg>
<svg class="ic" style="left:1592px;top:707px;" width="15" height="16" viewBox="0 0 15 16" fill="none" stroke="#0e4a87" stroke-width="1.5" stroke-linecap="round" stroke-linejoin="round"><path d="M0.8 9.9 3.9 15.2M3.9 9.9 0.8 15.2M5.4 15.2V9.9L7.7 13.1 10 9.9V15.2M11.6 9.9V15.2H14.6"/></svg>
<div class="abs" style="left:280.5px;top:759px;width:17px;height:17px;border:2px solid #5c5c5c;border-radius:2.5px"></div><div class="t" style="left:324px;top:757.0px;font-size:14px;line-height:20px;color:#3a3a3a;font-weight:400;letter-spacing:0.25px;">INV/000009</div>
<div class="t" style="left:515.3px;top:757.0px;font-size:14px;line-height:20px;color:#3a3a3a;font-weight:400;">Marketing IT Place</div>
<div class="t" style="left:706.5px;top:757.0px;font-size:14px;line-height:20px;color:#3a3a3a;font-weight:400;">25-02-2025</div>
<div class="t" style="left:898.2px;top:757.0px;font-size:14px;line-height:20px;color:#3a3a3a;font-weight:400;">14-05-2025</div>
<div class="t" style="right:419.5px;top:757.0px;font-size:14px;line-height:20px;color:#3a3a3a;font-weight:400;">3.699,92 €</div>
<div class="t" style="right:228px;top:757.0px;font-size:14px;line-height:20px;color:#3a3a3a;font-weight:400;">4.476,90 €</div>
<div class="abs" style="left:264px;top:794px;width:1388px;height:1px;background:#e0e0e0"></div><svg class="ic" style="left:1507.5px;top:760px;" width="15" height="15" viewBox="0 0 15 15" fill="none" stroke="#0e4a87" stroke-width="1.5" stroke-linecap="round" stroke-linejoin="round"><path d="M1 6.5 7.5 1.5 14 6.5V12.5a1 1 0 0 1-1 1H2a1 1 0 0 1-1-1z"/><path d="M1 6.5 7.5 10.5 14 6.5M1 13l4.8-4.2M14 13 9.2 8.8"/></svg>
<svg class="ic" style="left:1551px;top:759px;" width="15" height="16" viewBox="0 0 15 16" fill="none" stroke="#0e4a87" stroke-width="1.5" stroke-linecap="round" stroke-linejoin="round"><path d="M9 1v3a.8.8 0 0 0 .8.8H12.5"/><path d="M5.5 13.5H3a1.2 1.2 0 0 1-1.2-1.2V2.2A1.2 1.2 0 0 1 3 1h6l3.5 3.8V9"/><path d="M7.5 12.5h6M11.5 10.5l2 2-2 2"/></svg>
<svg class="ic" style="left:1592px;top:759px;" width="15" height="16" viewBox="0 0 15 16" fill="none" stroke="#0e4a87" stroke-width="1.5" stroke-linecap="round" stroke-linejoin="round"><path d="M9 1v3a.8.8 0 0 0 .8.8H12.5"/><path d="M2 8V2.2A1.2 1.2 0 0 1 3.2 1h5.8l3.5 3.8V8"/></svg>
<svg class="ic" style="left:1592px;top:759px;" width="15" height="16" viewBox="0 0 15 16" fill="none" stroke="#0e4a87" stroke-width="1.5" stroke-linecap="round" stroke-linejoin="round"><path d="M0.8 9.9 3.9 15.2M3.9 9.9 0.8 15.2M5.4 15.2V9.9L7.7 13.1 10 9.9V15.2M11.6 9.9V15.2H14.6"/></svg>
<div class="abs" style="left:280.5px;top:811px;width:17px;height:17px;border:2px solid #5c5c5c;border-radius:2.5px"></div><div class="t" style="left:324px;top:809.0px;font-size:14px;line-height:20px;color:#3a3a3a;font-weight:400;letter-spacing:0.25px;">INV/000008</div>
<div class="t" style="left:515.3px;top:809.0px;font-size:14px;line-height:20px;color:#3a3a3a;font-weight:400;">Marketing IT Place</div>
<div class="t" style="left:706.5px;top:809.0px;font-size:14px;line-height:20px;color:#3a3a3a;font-weight:400;">25-02-2025</div>
<div class="t" style="left:898.2px;top:809.0px;font-size:14px;line-height:20px;color:#3a3a3a;font-weight:400;">14-05-2025</div>
<div class="t" style="right:419.5px;top:809.0px;font-size:14px;line-height:20px;color:#3a3a3a;font-weight:400;">1.695,85 €</div>
<div class="t" style="right:228px;top:809.0px;font-size:14px;line-height:20px;color:#3a3a3a;font-weight:400;">1.695,85 €</div>
<svg class="ic" style="left:1507.5px;top:812px;" width="15" height="15" viewBox="0 0 15 15" fill="none" stroke="#0e4a87" stroke-width="1.5" stroke-linecap="round" stroke-linejoin="round"><path d="M1 6.5 7.5 1.5 14 6.5V12.5a1 1 0 0 1-1 1H2a1 1 0 0 1-1-1z"/><path d="M1 6.5 7.5 10.5 14 6.5M1 13l4.8-4.2M14 13 9.2 8.8"/></svg>
<svg class="ic" style="left:1551px;top:811px;" width="15" height="16" viewBox="0 0 15 16" fill="none" stroke="#0e4a87" stroke-width="1.5" stroke-linecap="round" stroke-linejoin="round"><path d="M9 1v3a.8.8 0 0 0 .8.8H12.5"/><path d="M5.5 13.5H3a1.2 1.2 0 0 1-1.2-1.2V2.2A1.2 1.2 0 0 1 3 1h6l3.5 3.8V9"/><path d="M7.5 12.5h6M11.5 10.5l2 2-2 2"/></svg>
<svg class="ic" style="left:1592px;top:811px;" width="15" height="16" viewBox="0 0 15 16" fill="none" stroke="#0e4a87" stroke-width="1.5" stroke-linecap="round" stroke-linejoin="round"><path d="M9 1v3a.8.8 0 0 0 .8.8H12.5"/><path d="M2 8V2.2A1.2 1.2 0 0 1 3.2 1h5.8l3.5 3.8V8"/></svg>
<svg class="ic" style="left:1592px;top:811px;" width="15" height="16" viewBox="0 0 15 16" fill="none" stroke="#0e4a87" stroke-width="1.5" stroke-linecap="round" stroke-linejoin="round"><path d="M0.8 9.9 3.9 15.2M3.9 9.9 0.8 15.2M5.4 15.2V9.9L7.7 13.1 10 9.9V15.2M11.6 9.9V15.2H14.6"/></svg>
<div class="abs" style="left:1560px;top:781.5px;width:96.5px;height:40.5px;border-radius:21px;background:#114c8c;border:2px solid #fff;box-shadow:0 3px 8px rgba(0,0,0,0.18)"></div><div class="abs" style="left:1551px;top:776px;width:45px;height:45px;border-radius:50%;background:linear-gradient(90deg,#2b7bbb,#12508f);border:2px solid #fff"></div><svg class="ic" style="left:1564.5px;top:790.5px;" width="19" height="17" viewBox="0 0 19 17" fill="none" stroke="#ffffff" stroke-width="1.4" stroke-linecap="round" stroke-linejoin="round"><path d="M7.5 12.5c-.9 0-1.7-.2-2.4-.5L2.5 13l.8-2C2.5 10.1 2 9 2 7.8 2 5 4.5 2.5 7.5 2.5c2.3 0 4.3 1.3 5 3.2"/><path d="M18 11c0-2.3-1.9-4-4.3-4s-4.3 1.8-4.3 4 1.9 4 4.3 4c.6 0 1.1-.1 1.6-.3l2 .9-.5-1.6c.8-.8 1.2-1.8 1.2-3z"/><path d="M6 6.8h.01M9 6.8h.01M12.6 11h.01M15 11h.01"/></svg>
<div class="t" style="left:1605px;top:792.3px;font-size:15.5px;line-height:20px;color:#ffffff;font-weight:400;">Apu</div>
<div class="abs" style="left:7px;top:294px;width:120px;height:33px;border:3px solid #7d0ef5;border-radius:11px;box-shadow:0 1.5px 4px rgba(0,0,0,0.5), inset 0 0.5px 5px rgba(0,0,0,0.6)"></div><svg class="ic" style="left:0;top:270px" width="245" height="70" viewBox="0 270 245 70">
<defs><filter id="sh" x="-20%" y="-50%" width="140%" height="200%"><feGaussianBlur in="SourceAlpha" stdDeviation="2.2"/><feOffset dx="0" dy="1"/><feComponentTransfer><feFuncA type="linear" slope="0.55"/></feComponentTransfer><feMerge><feMergeNode/><feMergeNode in="SourceGraphic"/></feMerge></filter></defs>
<g filter="url(#sh)">
<path d="M240 284.5 L145 305" stroke="#7d0ef5" stroke-width="3" fill="none" stroke-linecap="round"/>
<path d="M128 309.5 L147.5 296.5 L145 305.5 L152 312.5 z" fill="#7d0ef5" stroke="#7d0ef5" stroke-width="1.2" stroke-linejoin="round"/>
</g></svg><div class="abs" style="left:0;top:842px;width:1679px;height:3px;background:#1c1c1c"></div><div class="abs" style="left:348px;top:842px;width:48px;height:3px;background:#474747"></div><div class="abs" style="left:1676px;top:2px;width:3px;height:840px;background:#dcdcdc"></div><div class="abs" style="left:1676px;top:2px;width:3px;height:739px;background:#9e9e9e;border-radius:1px"></div></body></html>
